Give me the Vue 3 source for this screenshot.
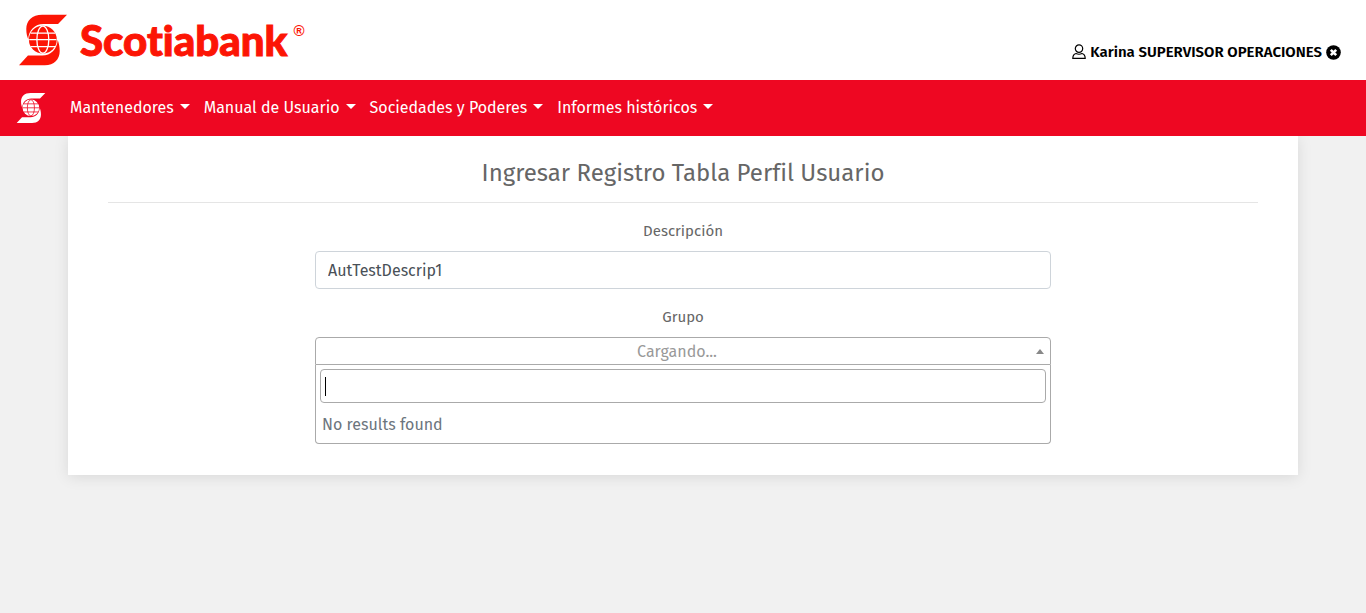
<script setup>
import { ref } from 'vue'

const menus = ['Mantenedores', 'Manual de Usuario', 'Sociedades y Poderes', 'Informes históricos']
const descripcion = ref('AutTestDescrip1')
const grupo = ref('')
const busqueda = ref('')
</script>

<template>
  <div class="page">
    <svg class="defs" width="0" height="0" aria-hidden="true">
      <symbol id="mark" viewBox="28 31 145 152">
        <path fill="currentColor" stroke="none" d="M173 31H98C68 31 50 48 50 74C50 88 53 98 56 105C57 78 76 59 102 59H146Z" />
        <path fill="currentColor" stroke="none" d="M28 183H106C134 183 151 166 151 140C151 126 148 115 145 107C143 135 124 154 98 154H55Z" />
        <circle cx="100" cy="106" r="42" fill="currentColor" stroke="none" />
        <g fill="none" stroke-width="4">
          <ellipse cx="100" cy="106" rx="18" ry="41" />
          <path d="M63 86H137M59 106H141M63 127H137" />
        </g>
      </symbol>
    </svg>

    <header class="top">
      <a class="brand" href="#" aria-label="Scotiabank">
        <svg class="brand-mark"><use href="#mark" /></svg>
        <span class="brand-name">Scotiabank</span>
        <span class="reg">®</span>
      </a>
      <div class="user">
        <svg width="14" height="16" viewBox="0 0 14 16" fill="none" stroke="currentColor" stroke-width="1.2">
          <circle cx="7" cy="4.600" r="3.700" />
          <path d="M4 9.500C2 10 .8 11.500 .8 14.400H13.200C13.200 11.500 12 10 10 9.500C8 10.500 6 10.500 4 9.500Z" />
        </svg>
        <span>Karina SUPERVISOR OPERACIONES</span>
        <a href="#" class="logout" aria-label="Cerrar sesión">
          <svg width="15" height="15" viewBox="0 0 15 15">
            <circle cx="7.500" cy="7.500" r="7.300" fill="currentColor" />
            <path d="M4.800 4.800L10.200 10.200M10.200 4.800L4.800 10.200" stroke="#fff" stroke-width="2.600" />
          </svg>
        </a>
      </div>
    </header>

    <nav class="nav">
      <a class="nav-brand" href="#" aria-label="Inicio"><svg class="nav-mark"><use href="#mark" /></svg></a>
      <button v-for="m in menus" :key="m" type="button" class="menu">{{ m }}<i class="caret"></i></button>
    </nav>

    <main class="card">
      <h1>Ingresar Registro Tabla Perfil Usuario</h1>
      <form class="form" @submit.prevent>
        <label for="descripcion">Descripción</label>
        <input id="descripcion" v-model="descripcion" class="text" type="text">
        <label for="grupo">Grupo</label>
        <div class="picker">
          <select id="grupo" v-model="grupo">
            <option value="">Cargando...</option>
          </select>
          <i class="arrow"></i>
        </div>
        <div class="drop">
          <div class="search">
            <input v-model="busqueda" type="search" aria-label="Buscar grupo">
            <i class="cursor"></i>
          </div>
          <p>No results found</p>
        </div>
      </form>
    </main>
  </div>
</template>

<style>
body {
  margin: 0;
  background: #f1f1f1;
}
</style>

<style scoped>
* {
  box-sizing: border-box;
}
.page {
  min-height: 100vh;
  background: #f1f1f1;
  font: 16px/24px "Trebuchet MS", "Fira Sans", "Open Sans", "Noto Sans", sans-serif;
  font-variant-ligatures: none;
  color: #666;
}
.defs {
  position: absolute;
}
.top {
  height: 80px;
  padding: 0 25px 0 19px;
  background: #fff;
  display: flex;
  justify-content: space-between;
}
.brand {
  display: flex;
  align-items: center;
  color: #fc1505;
  text-decoration: none;
}
.brand-mark {
  width: 48px;
  height: 52px;
  margin-right: 13px;
  stroke: #fff;
}
.brand-name {
  font: 900 42px/52px Lato, sans-serif;
  font-variant-ligatures: none;
  -webkit-text-stroke: 1px currentColor;
}
.reg {
  font: 700 15px/16px "Liberation Sans", sans-serif;
  align-self: flex-start;
  margin: 23px 0 0 6px;
}
.user {
  display: flex;
  align-items: center;
  gap: 4px;
  margin-top: 24px;
  color: #000;
  font-size: 15px;
  font-weight: 600;
}
.logout {
  color: #000;
  display: flex;
}
.nav {
  position: relative;
  z-index: 1;
  min-height: 56px;
  padding: 0 16px;
  display: flex;
  align-items: center;
  background: #ee0722;
  color: #fff;
}
.nav-brand {
  display: flex;
  color: #fff;
  margin-right: 17px;
}
.nav-mark {
  width: 30px;
  height: 30px;
  stroke: #ee0722;
}
.menu {
  font: inherit;
  color: inherit;
  background: none;
  border: 0;
  padding: 8px 7px;
  display: flex;
  align-items: center;
  gap: 6px;
}
.caret {
  border: 5px solid transparent;
  border-top-color: #fff;
  border-bottom: 0;
  margin-bottom: 4px;
}
.card {
  margin: 0 68px;
  padding: 21px 40px 31px;
  background: #fff;
  box-shadow: 0 2px 14px rgba(0, 0, 0, 0.1);
}
h1 {
  margin: 0 0 16px;
  padding-bottom: 13px;
  border-bottom: 1px solid #e5e5e5;
  font-size: 24px;
  line-height: 32px;
  font-weight: 400;
  text-align: center;
}
.form {
  width: 64%;
  margin: 0 auto;
  display: flex;
  flex-direction: column;
}
label {
  font-size: 15px;
  text-align: center;
  margin-bottom: 8px;
}
.text {
  font: inherit;
  color: #495057;
  height: 38px;
  padding: 6px 12px;
  border: 1px solid #ced4da;
  border-radius: 4px;
  margin-bottom: 16px;
  background: #fff;
}
.picker {
  position: relative;
  display: flex;
}
select {
  appearance: none;
  flex: 1;
  height: 28px;
  padding: 2px 20px 0 8px;
  border: 1px solid #aaa;
  border-radius: 4px 4px 0 0;
  background: #fff;
  font: inherit;
  color: #999;
  text-align: center;
  text-align-last: center;
}
.arrow {
  position: absolute;
  right: 7px;
  top: 12px;
  border: 4px solid transparent;
  border-bottom: 5px solid #888;
  border-top: 0;
  pointer-events: none;
}
.drop {
  border: 1px solid #aaa;
  border-top: 0;
  border-radius: 0 0 4px 4px;
  color: #6c757d;
}
.search {
  position: relative;
  padding: 4px;
}
.search input {
  display: block;
  width: 100%;
  height: 34px;
  padding: 4px;
  border: 1px solid #aaa;
  border-radius: 4px;
  font: inherit;
  outline: 0;
}
.cursor {
  position: absolute;
  left: 9px;
  top: 12px;
  width: 1px;
  height: 19px;
  background: #000;
}
p {
  margin: 0;
  padding: 6px;
}
</style>
